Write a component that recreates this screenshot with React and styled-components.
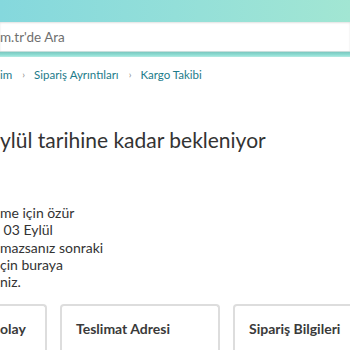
import React from "react";
import styled, { createGlobalStyle } from "styled-components";

const GlobalStyle = createGlobalStyle`
  html, body {
    margin: 0;
    padding: 0;
    background: #ffffff;
    overflow: hidden;
  }
  body {
    font-family: "Lato", "Noto Sans", "Liberation Sans", sans-serif;
    color: #0f1111;
  }
`;

const Page = styled.div`
  width: 350px;
  height: 350px;
  overflow: hidden;
`;

const Header = styled.header`
  background: linear-gradient(90deg, #85d8dd 0%, #93dfd9 50%, #a2e6d3 100%);
  padding-top: 22px;
`;

const SearchBar = styled.div`
  height: 29px;
  background: #ffffff;
  display: flex;
  align-items: center;
  box-shadow: inset 0 1px 2px rgba(0, 0, 0, 0.12);
  border-bottom: 1px solid #c8dedb;
`;

const SearchText = styled.span`
  font-size: 13.5px;
  color: #6f6f6f;
  margin-top: 1px;
`;

const HeaderFoot = styled.div`
  height: 5px;
  background: linear-gradient(180deg, #7cc8c0 0%, #8fded4 60%, #b6ece4 100%);
`;

const Crumbs = styled.nav`
  display: flex;
  align-items: center;
  margin-top: 10px;
  font-size: 11.5px;
  height: 14px;
`;

const CrumbLink = styled.span`
  color: #1d7b8a;
`;

const Sep = styled.span`
  color: #8a8a8a;
  font-size: 10px;
  padding: 0 9px 0 10px;
`;

const Heading = styled.h1`
  margin: 46px 0 0;
  font-weight: 400;
  font-size: 21px;
  line-height: 26px;
  color: #333333;
  white-space: nowrap;
`;

const Body = styled.p`
  margin: 51px 0 0;
  font-size: 14px;
  line-height: 17.3px;
  color: #333333;
`;

const Cards = styled.div`
  display: grid;
  grid-template-columns: 47px 160px 160px;
  column-gap: 13px;
  margin-top: 14px;
`;

const Card = styled.div`
  height: 60px;
  border: 2px solid #dddddd;
  border-bottom: none;
  border-radius: 4px 4px 0 0;
  padding: 14px 0 0 ${(p) => (p.$cut ? "0" : "14px")};
  ${(p) => p.$cut && "border-left: none; border-top-left-radius: 0;"}
`;

const CardTitle = styled.h2`
  margin: 0;
  font-size: 14px;
  line-height: 18px;
  font-weight: 700;
  color: #3a3a3a;
  white-space: nowrap;
`;

export default function App() {
  return (
    <Page>
      <GlobalStyle />
      <Header>
        <SearchBar>
          <SearchText>m.tr'de Ara</SearchText>
        </SearchBar>
        <HeaderFoot />
      </Header>
      <Crumbs>
        <CrumbLink>im</CrumbLink>
        <Sep>›</Sep>
        <CrumbLink>Sipariş Ayrıntıları</CrumbLink>
        <Sep>›</Sep>
        <CrumbLink>Kargo Takibi</CrumbLink>
      </Crumbs>
      <Heading>ylül tarihine kadar bekleniyor</Heading>
      <Body>
        me için özür
        <br />
        &nbsp;03 Eylül
        <br />
        mazsanız sonraki
        <br />
        çin buraya
        <br />
        niz.
      </Body>
      <Cards>
        <Card $cut>
          <CardTitle>olay</CardTitle>
        </Card>
        <Card>
          <CardTitle>Teslimat Adresi</CardTitle>
        </Card>
        <Card>
          <CardTitle>Sipariş Bilgileri</CardTitle>
        </Card>
      </Cards>
    </Page>
  );
}
